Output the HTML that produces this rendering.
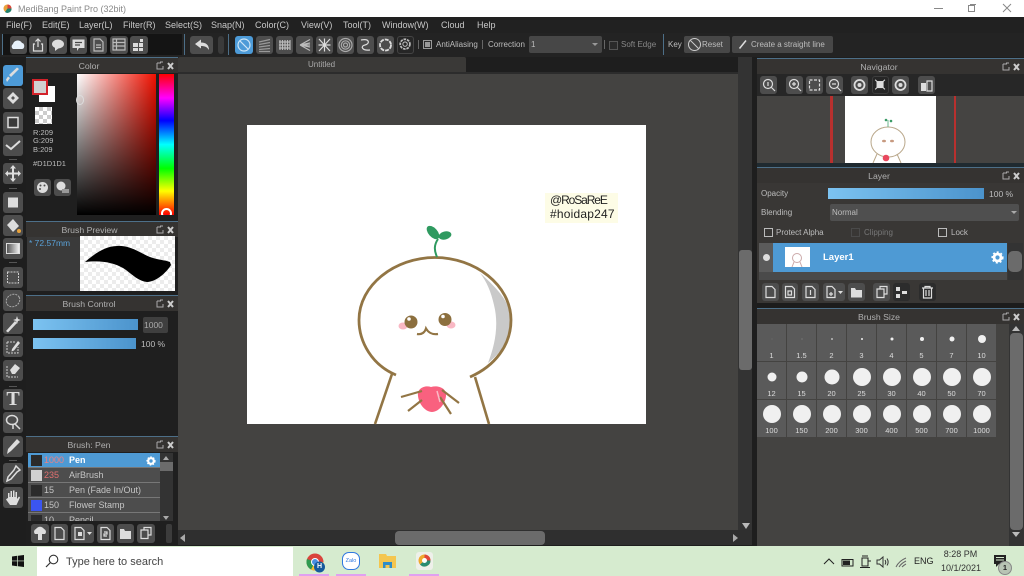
<!DOCTYPE html>
<html><head><meta charset="utf-8"><title>MediBang Paint Pro</title>
<style>
html,body{margin:0;padding:0;width:1024px;height:576px;overflow:hidden;background:#1e1e1e;font-family:"Liberation Sans",sans-serif}
div,span,svg{position:absolute;box-sizing:border-box}
.t{white-space:nowrap;font-size:8px;color:#bdbdbd;line-height:10px}
.m{top:20px;font-size:9px;color:#c8c8c8;line-height:11px;white-space:nowrap}
.b{background:#4d4d4d;border-radius:3px;top:36px;height:18px}
.b svg{left:0;top:0;width:100%;height:100%;fill:none;stroke:#ddd;stroke-width:1.2}
.h{background:#353331;border-top:1px solid #4d6f88;height:16px}
.h .t{left:0;text-align:center;top:3px;color:#b0b0b0;font-size:8.7px}
.h svg{top:3px;width:20px;height:10px;right:3px;fill:none;stroke:#aaa}
.tb{left:3px;width:20px;height:21px;background:#4d4d4d;border-radius:3px}
.tb svg{left:0;top:0;width:20px;height:21px;fill:#ddd;stroke:none}
.sp{left:9px;width:8px;height:1px;background:#555}
.sl{background:linear-gradient(90deg,#7cc3f1,#4b93cc);height:11px}
.rw{left:28px;width:132px;height:15px;background:#4d4d4d;border-bottom:1px solid #777}
.sw{left:3px;top:2px;width:11px;height:11px}
.n{left:16px;top:2px;font-size:9px;line-height:11px;color:#c5c5c5;white-space:nowrap}
.c{background:#5a5a5a;width:29px;height:37px}
.c i{position:absolute;background:#f0f0f0;border-radius:50%;left:50%;top:15px;transform:translate(-50%,-50%);display:block}
.c b{position:absolute;left:0;width:100%;top:27px;text-align:center;font:400 7.5px/10px "Liberation Sans",sans-serif;color:#ddd}
.r3 i{top:14px}.r3 b{top:26px}
.bb{background:#4d4d4d;border-radius:3px;height:18px;top:283px}
.bl{background:#4d4d4d;border-radius:3px;height:19px;top:524px}
.bb svg,.bl svg,.nb svg{left:0;top:0;width:100%;height:100%;fill:none;stroke:#ddd;stroke-width:1.2}
.nb{background:#4d4d4d;border-radius:3px;top:76px;height:18px}
</style></head>
<body>
<!-- title bar -->
<div style="left:0;top:0;width:1024px;height:17px;background:#fff"></div>
<svg style="left:3px;top:4px;width:9px;height:9px" viewBox="0 0 9 9"><circle cx="4.500" cy="4.500" r="4" fill="#e9a23b"/><path d="M4.500 4.500L4.500.5A4 4 0 0 1 8.500 4.500Z" fill="#d9433c"/><path d="M4.500 4.500L8.500 4.500A4 4 0 0 1 2 8Z" fill="#23806c"/></svg>
<div class="t" style="left:18px;top:4px;font-size:9px;color:#8a8a8a">MediBang Paint Pro (32bit)</div>
<div style="left:934px;top:8px;width:9px;height:1px;background:#888"></div>
<div style="left:968px;top:5px;width:7px;height:7px;border:1px solid #888;background:#fff"></div>
<div style="left:970px;top:4px;width:6px;height:1px;background:#888"></div>
<svg style="left:1002px;top:3px;width:10px;height:10px" viewBox="0 0 10 10"><path d="M1 1L9 9M9 1L1 9" stroke="#888" fill="none"/></svg>
<!-- menu -->
<div style="left:0;top:17px;width:1024px;height:16px;background:#212121"></div>
<div class="m" style="left:6px">File(F)</div><div class="m" style="left:42px">Edit(E)</div><div class="m" style="left:79px">Layer(L)</div><div class="m" style="left:123px">Filter(R)</div><div class="m" style="left:165px">Select(S)</div><div class="m" style="left:211px">Snap(N)</div><div class="m" style="left:255px">Color(C)</div><div class="m" style="left:301px">View(V)</div><div class="m" style="left:343px">Tool(T)</div><div class="m" style="left:382px">Window(W)</div><div class="m" style="left:441px">Cloud</div><div class="m" style="left:477px">Help</div>
<!-- toolbar -->
<div style="left:0;top:33px;width:1024px;height:24px;background:#232323"></div>
<div style="left:3px;top:34px;width:179px;height:21px;background:#141414"></div>
<div style="left:2px;top:34px;width:1px;height:21px;background:#4d6f88"></div>
<div style="left:184px;top:34px;width:1px;height:21px;background:#4d6f88"></div>
<div style="left:228px;top:34px;width:1px;height:21px;background:#4d6f88"></div>
<div style="left:663px;top:34px;width:1px;height:21px;background:#4d6f88"></div>
<div class="b" style="left:10px;width:17px"><svg viewBox="0 0 17 18"><path d="M3 13a3 3 0 0 1 0-5c1-4 7-5 9-1 3 0 3 6 0 6Z" fill="#e8f2fb" stroke="none"/></svg></div>
<div class="b" style="left:29px;width:18px"><svg viewBox="0 0 18 18"><path d="M6 8H4.500V15H13.500V8H12M9 11V3M6.500 5.500L9 3L11.500 5.500"/></svg></div>
<div class="b" style="left:49px;width:18px"><svg viewBox="0 0 18 18"><ellipse cx="9" cy="8" rx="6" ry="4.500" fill="#ddd" stroke="none"/><path d="M6 11L6 15L10 12" fill="#ddd" stroke="none"/></svg></div>
<div class="b" style="left:70px;width:17px"><svg viewBox="0 0 17 18"><path d="M2.500 3.500H14.500V12H9L7 15V12H2.500Z" fill="#ddd" stroke="none"/><path d="M5 6.500H12M5 9H10" stroke="#484848"/></svg></div>
<div class="b" style="left:90px;width:17px"><svg viewBox="0 0 17 18"><path d="M4 3H10L13 6V15H4ZM6 9H11M6 11.500H11" stroke="#bbb"/></svg></div>
<div class="b" style="left:110px;width:18px"><svg viewBox="0 0 18 18"><path d="M3 3H15V14H3ZM3 6.500H15M3 10H15M6.500 3V14" stroke="#bbb"/></svg></div>
<div class="b" style="left:130px;width:18px"><svg viewBox="0 0 18 18"><path d="M3 7H8V11H3ZM9 7H13V11H9ZM3 12H8V15H3ZM9 12H13V15H9ZM10 3H13V6H10Z" fill="#ddd" stroke="none"/></svg></div>
<div class="b" style="left:190px;width:23px"><svg viewBox="0 0 23 18"><path d="M5 8L11 3.500V6.500C16 6.500 19 9 19 14C17 11 15 10 11 10V12.500Z" fill="#ddd" stroke="none"/></svg></div>
<div class="b" style="left:218px;width:6px;background:#3a3a3a"></div>
<div class="b" style="left:235px;width:18px;background:#4d9bd8"><svg viewBox="0 0 18 18"><circle cx="9" cy="9" r="6" stroke="#cfe6f7"/><path d="M5 5L13 13" stroke="#cfe6f7"/></svg></div>
<div class="b" style="left:256px;width:17px"><svg viewBox="0 0 17 18" style="stroke:#999"><path d="M3 6L14 3.500M3 8.500L14 6.500M3 11L14 9.500M3 13.500L14 12.500M3 15.500H14"/></svg></div>
<div class="b" style="left:276px;width:17px"><svg viewBox="0 0 17 18" style="stroke:#bbb"><path d="M4 4V14M6.500 4V14M9 4V14M11.500 4V14M14 4V14M3 6H14M3 9H14M3 12H14"/></svg></div>
<div class="b" style="left:296px;width:17px"><svg viewBox="0 0 17 18" style="stroke:#bbb"><path d="M4 9L14 3.500M4 9L14 7M4 9H14M4 9L14 11M4 9L14 14.500"/></svg></div>
<div class="b" style="left:316px;width:17px"><svg viewBox="0 0 17 18"><path d="M3 3L14 15M14 3L3 15M8.500 2.500V15.500M2.500 9H14.500"/></svg></div>
<div class="b" style="left:337px;width:17px"><svg viewBox="0 0 17 18" style="stroke:#aaa"><circle cx="8.500" cy="9" r="6.500"/><circle cx="8.500" cy="9" r="4.200"/><circle cx="8.500" cy="9" r="2"/></svg></div>
<div class="b" style="left:357px;width:17px"><svg viewBox="0 0 17 18"><path d="M4 4C13 2 13 8 8 9S5 15 13 14"/></svg></div>
<div class="b" style="left:377px;width:17px"><svg viewBox="0 0 17 18" style="stroke-width:1.800"><circle cx="8.500" cy="9" r="5.500" stroke-dasharray="4 1"/></svg></div>
<div class="b" style="left:397px;width:17px;background:#262626;border:1px solid #444"><svg viewBox="0 0 17 18"><circle cx="8" cy="8" r="5.500" stroke-dasharray="3 1" stroke-width="2" stroke="#bbb"/><circle cx="8" cy="8" r="2.500" stroke="#bbb"/></svg></div>
<div style="left:418px;top:40px;width:1px;height:9px;background:#666"></div>
<div style="left:423px;top:40px;width:9px;height:9px;background:#2a2a2a;border:1px solid #999"></div>
<div style="left:425px;top:42px;width:5px;height:5px;background:#999"></div>
<div class="t" style="left:436px;top:40px">AntiAliasing</div>
<div style="left:482px;top:40px;width:1px;height:9px;background:#666"></div>
<div class="t" style="left:488px;top:40px">Correction</div>
<div style="left:529px;top:36px;width:73px;height:17px;background:#474747;border-radius:2px"></div>
<div class="t" style="left:531px;top:40px">1</div>
<div style="left:592px;top:43px;border:3px solid transparent;border-top:3px solid #999"></div>
<div style="left:604px;top:40px;width:1px;height:9px;background:#666"></div>
<div style="left:609px;top:41px;width:9px;height:9px;background:#2a2a2a;border:1px solid #555"></div>
<div class="t" style="left:621px;top:40px;color:#888">Soft Edge</div>
<div class="t" style="left:668px;top:40px">Key</div>
<div style="left:684px;top:36px;width:46px;height:17px;background:#474747;border-radius:2px"></div>
<svg style="left:687px;top:37px;width:15px;height:15px" viewBox="0 0 15 15"><circle cx="7.500" cy="7.500" r="6" fill="none" stroke="#ccc"/><path d="M3.500 3.500L11.500 11.500" stroke="#ccc"/></svg>
<div class="t" style="left:702px;top:40px">Reset</div>
<div style="left:732px;top:36px;width:101px;height:17px;background:#474747;border-radius:2px"></div>
<svg style="left:738px;top:39px;width:10px;height:11px" viewBox="0 0 10 11"><path d="M1.500 9.500L8 1.500" stroke="#ddd" stroke-width="1.500"/></svg>
<div class="t" style="left:751px;top:40px">Create a straight line</div>
<!-- centre area -->
<div style="left:178px;top:57px;width:579px;height:489px;background:#1e1e1e"></div>
<div style="left:178px;top:57px;width:288px;height:15px;background:#3a3937;border-radius:2px 2px 0 0"></div>
<div class="t" style="left:308px;top:60px;color:#aaa">Untitled</div>
<div style="left:178px;top:72px;width:574px;height:2px;background:#2c2c2c"></div>
<div style="left:178px;top:74px;width:560px;height:456px;background:#444341"></div>
<div style="left:738px;top:57px;width:14px;height:473px;background:#333"></div>
<div style="left:739px;top:250px;width:13px;height:120px;background:#6b6b6b;border-radius:3px"></div>
<div style="left:742px;top:523px;border:4px solid transparent;border-top:6px solid #bbb;border-bottom:0"></div>
<div style="left:178px;top:530px;width:574px;height:15px;background:#2f2f2f"></div>
<div style="left:395px;top:531px;width:150px;height:14px;background:#6b6b6b;border-radius:4px"></div>
<div style="left:180px;top:534px;border:4px solid transparent;border-right:5px solid #aaa;border-left:0"></div>
<div style="left:733px;top:534px;border:4px solid transparent;border-left:5px solid #aaa;border-right:0"></div>
<!-- canvas -->
<div style="left:247px;top:125px;width:399px;height:299px;background:#fff"></div>
<div style="left:545px;top:193px;width:73px;height:30px;background:#fdfce6"></div>
<div class="t" style="left:550px;top:193px;font-size:12px;line-height:14px;color:#222"><span style="position:static;letter-spacing:-1.1px">@RoSaReE</span><br><span style="position:static;letter-spacing:.2px">#hoidap247</span></div>
<svg style="left:340px;top:180px;width:300px;height:245px" viewBox="340 180 300 245">
<path d="M480 273C498 289 511 303 511 320C511 338 501 353 488 363C495 345 499 325 494 305C491 292 487 282 480 273Z" fill="#c9c9c9"/>
<path d="M396 375C372 365 359 342 359 320C359 285 395 257.500 435 257.500C475 257.500 511 285 511 320C511 345 495 366 470 377" fill="none" stroke="#927544" stroke-width="2.800"/>
<path d="M392 374L375 424M475 377L489 424" fill="none" stroke="#927544" stroke-width="2.600"/>
<path d="M437 257C434 250 434 245 438 239" fill="none" stroke="#2f9a60" stroke-width="2"/>
<ellipse cx="433" cy="232.500" rx="8" ry="4.500" transform="rotate(48 433 232.500)" fill="#2f9a60"/>
<ellipse cx="445" cy="235.500" rx="6.500" ry="4" transform="rotate(-15 445 235.500)" fill="#2f9a60"/>
<ellipse cx="403" cy="326" rx="4.500" ry="3.500" fill="#f9b8c4"/><ellipse cx="451" cy="325" rx="4.500" ry="3.500" fill="#f9b8c4"/>
<circle cx="411" cy="322" r="6.500" fill="#8c6f3e"/><circle cx="445" cy="319.500" r="6.500" fill="#8c6f3e"/>
<circle cx="409" cy="319" r="1.800" fill="#fff"/><circle cx="443" cy="316.500" r="1.800" fill="#fff"/>
<path d="M417 334C422 335 425 332 426 328.500C428 332 432 335 438 334" fill="none" stroke="#927544" stroke-width="2.200"/>
<path d="M431 387C425 385 417 388 418 396C419 405 426 412 432 412C438 412 445 405 446 396C447 388 438 385 431 387Z" fill="#f9617f"/>
<path d="M401 397L422 391M408 411L422 400M442 390L459 403M440 397L451 414" fill="none" stroke="#927544" stroke-width="2.200"/>
<path d="M437 391L440 402" stroke="#fbb9c6" stroke-width="1.500" fill="none"/>
</svg>
<!-- left tool bar -->
<div style="left:0;top:57px;width:26px;height:489px;background:#1e1e1e"></div>
<div class="tb" style="top:65px;background:#4d9bd8"><svg viewBox="0 0 20 21"><path d="M16 4L8 12L6 10L14 2.500ZM7 13L4 17L3 14.500L5 11.500Z"/></svg></div>
<div class="tb" style="top:88px"><svg viewBox="0 0 20 21"><path d="M4 10L10 4L16 10L10 16Z"/><path d="M8 10L10 8L12 10L10 12Z" fill="#555"/></svg></div>
<div class="tb" style="top:112px"><svg viewBox="0 0 20 21" style="fill:#3a3a3a;stroke:#ddd;stroke-width:1.500"><rect x="5" y="5.500" width="10" height="10"/></svg></div>
<div class="tb" style="top:135px"><svg viewBox="0 0 20 21" style="fill:none;stroke:#ddd;stroke-width:2"><path d="M3 10L8 14L17 6"/></svg></div>
<div class="sp" style="top:159px"></div>
<div class="tb" style="top:163px"><svg viewBox="0 0 20 21"><path d="M10 2L13 5.500H11V9.500H15V7.500L18 10.500L15 13.500V11.500H11V15.500H13L10 19L7 15.500H9V11.500H5V13.500L2 10.500L5 7.500V9.500H9V5.500H7Z"/></svg></div>
<div class="sp" style="top:188px"></div>
<div class="tb" style="top:192px"><svg viewBox="0 0 20 21"><rect x="5" y="5.500" width="10" height="10"/></svg></div>
<div class="tb" style="top:215px"><svg viewBox="0 0 20 21"><path d="M4 10L10 4L16 11L10 17Z"/><circle cx="16" cy="16" r="2" fill="#e8a23b"/></svg></div>
<div class="tb" style="top:238px"><div style="left:3px;top:5px;width:14px;height:11px;background:linear-gradient(90deg,#555,#eee);border:1px solid #ddd"></div></div>
<div class="sp" style="top:262px"></div>
<div class="tb" style="top:267px"><svg viewBox="0 0 20 21" style="fill:none;stroke:#ccc;stroke-dasharray:2 1"><rect x="4.500" y="5" width="11" height="11"/></svg></div>
<div class="tb" style="top:290px"><svg viewBox="0 0 20 21" style="fill:none;stroke:#aaa;stroke-dasharray:2 1"><ellipse cx="10" cy="10.500" rx="7" ry="6" transform="rotate(-30 10 10.500)"/></svg></div>
<div class="tb" style="top:313px"><svg viewBox="0 0 20 21"><path d="M3 18L12 8L14 10L5 19.500Z"/><path d="M14 3L15 6L18 7L15 8L14 11L13 8L10 7L13 6Z"/></svg></div>
<div class="tb" style="top:336px"><svg viewBox="0 0 20 21"><path d="M4 6H13M4 6V17H15V11" fill="none" stroke="#ccc" stroke-dasharray="2 1"/><path d="M9 13L15 5L17 7L11 14.500L8.500 15.500Z"/></svg></div>
<div class="tb" style="top:360px"><svg viewBox="0 0 20 21"><path d="M4 6V17H15" fill="none" stroke="#ccc" stroke-dasharray="2 1"/><path d="M7 10L12 4L17 8L12 14H9Z"/></svg></div>
<div class="sp" style="top:386px"></div>
<div class="tb" style="top:389px"><div style="left:3px;top:0;font:700 20px/21px 'Liberation Serif',serif;color:#ddd;width:14px;text-align:center">T</div></div>
<div class="tb" style="top:412px"><svg viewBox="0 0 20 21" style="fill:none;stroke:#ddd;stroke-width:1.500"><ellipse cx="9" cy="8" rx="5.500" ry="4.500"/><path d="M12 12L17 17M10 13L10 17"/></svg></div>
<div class="tb" style="top:436px"><svg viewBox="0 0 20 21"><path d="M14 3L17 6L8 15L4 18L5 13Z"/></svg></div>
<div class="sp" style="top:460px"></div>
<div class="tb" style="top:463px"><svg viewBox="0 0 20 21"><path d="M13 3L17 7L14 9L8 16L4 18L5 14L11 7Z" fill="none" stroke="#ddd" stroke-width="1.500"/></svg></div>
<div class="tb" style="top:487px"><svg viewBox="0 0 20 21"><path d="M5 11V6h1.500V10H7.500V4H9V10H10V3.500h1.500V10H12.500V5H14V12L16 9.500 17 10.500 13.500 18H7L3 12.500 4 11.500Z"/></svg></div>
<!-- Color panel -->
<div style="left:26px;top:57px;width:152px;height:489px;background:#1f1f1f"></div>
<div class="h" style="left:26px;top:57px;width:152px"><div class="t" style="width:126px">Color</div><svg viewBox="0 0 20 10"><path d="M2 2H6M8 1H5M2 2V8H8V5"/><path d="M13 2L18 8M18 2L13 8" stroke-width="2" stroke="#ccc"/></svg></div>
<div style="left:39px;top:86px;width:16px;height:16px;background:#fff"></div>
<div style="left:32px;top:79px;width:16px;height:16px;background:#d1d1d1;border:2px solid #d3222a"></div>
<div style="left:35px;top:107px;width:17px;height:17px;background:conic-gradient(#ccc 25%,#fff 0 50%,#ccc 0 75%,#fff 0) 0 0/8px 8px"></div>
<div class="t" style="left:33px;top:129px;font-size:7.500px;line-height:8.300px">R:209<br>G:209<br>B:209</div>
<div class="t" style="left:33px;top:159px;font-size:7.500px">#D1D1D1</div>
<div class="b" style="left:34px;top:179px;width:17px;height:17px"><svg viewBox="0 0 17 17"><circle cx="8.500" cy="8.500" r="5.500" fill="#ddd" stroke="none"/><circle cx="6.500" cy="6.500" r="1" fill="#4d4d4d" stroke="none"/><circle cx="10.500" cy="6.500" r="1" fill="#4d4d4d" stroke="none"/><circle cx="6" cy="10" r="1" fill="#4d4d4d" stroke="none"/></svg></div>
<div class="b" style="left:54px;top:179px;width:17px;height:17px"><svg viewBox="0 0 17 17"><circle cx="7" cy="7" r="4.500" fill="#ddd" stroke="none"/><rect x="8" y="10" width="7" height="4" fill="#999" stroke="none"/></svg></div>
<div style="left:77px;top:74px;width:79px;height:141px;background:linear-gradient(180deg,transparent,#000),linear-gradient(90deg,#fff,#f01000)"></div>
<div style="left:76px;top:95px;width:8px;height:10px;border:1px solid #ddd;border-radius:50%"></div>
<div style="left:159px;top:74px;width:15px;height:141px;background:linear-gradient(180deg,#f00 0%,#f0f 17%,#00f 33%,#0ff 50%,#0f0 67%,#ff0 83%,#f00 100%)"></div>
<div style="left:161px;top:208px;width:11px;height:11px;border:2px solid #fff;border-radius:50%"></div>
<div style="left:159px;top:215px;width:15px;height:6px;background:#1f1f1f"></div>
<!-- Brush preview -->
<div class="h" style="left:26px;top:221px;width:152px"><div class="t" style="width:127px">Brush Preview</div><svg viewBox="0 0 20 10"><path d="M2 2H6M8 1H5M2 2V8H8V5"/><path d="M13 2L18 8M18 2L13 8" stroke-width="2" stroke="#ccc"/></svg></div>
<div style="left:27px;top:237px;width:53px;height:54px;background:#3a3a3a"></div>
<div class="t" style="left:29px;top:238px;color:#5aa0d6;font-size:8.500px">* 72.57mm</div>
<div style="left:80px;top:236px;width:95px;height:55px;background:conic-gradient(#ececec 25%,#fff 0 50%,#ececec 0 75%,#fff 0) 0 0/8px 8px"></div>
<svg style="left:80px;top:236px;width:95px;height:55px" viewBox="80 236 95 55"><path d="M85 262C92 256 104 246 117 246C130 245 140 253 150 257C158 260 165 260 170 262L171 265C167 272 156 282 147 282C137 281 130 272 123 268C114 263 102 260 85 262Z" fill="#000"/></svg>
<!-- Brush control -->
<div class="h" style="left:26px;top:295px;width:152px"><div class="t" style="width:126px">Brush Control</div><svg viewBox="0 0 20 10"><path d="M2 2H6M8 1H5M2 2V8H8V5"/><path d="M13 2L18 8M18 2L13 8" stroke-width="2" stroke="#ccc"/></svg></div>
<div class="sl" style="left:33px;top:319px;width:105px"></div>
<div style="left:143px;top:317px;width:25px;height:16px;background:#3f3f3f;border-radius:2px"></div>
<div class="t" style="left:144px;top:320px;font-size:8.500px;color:#aaa">1000</div>
<div class="sl" style="left:33px;top:338px;width:103px"></div>
<div class="t" style="left:141px;top:339px;font-size:8.500px">100 %</div>
<!-- Brush list -->
<div class="h" style="left:26px;top:436px;width:152px"><div class="t" style="width:126px">Brush: Pen</div><svg viewBox="0 0 20 10"><path d="M2 2H6M8 1H5M2 2V8H8V5"/><path d="M13 2L18 8M18 2L13 8" stroke-width="2" stroke="#ccc"/></svg></div>
<div class="rw" style="top:453px;background:#4e9ad4"><div class="sw" style="background:#2b2b2b"></div><div class="n" style="color:#f08080">1000</div><div class="n" style="left:41px;color:#fff;font-weight:700">Pen</div>
<svg style="left:118px;top:3px;width:10px;height:10px" viewBox="0 0 10 10"><circle cx="5" cy="5" r="2.800" fill="none" stroke="#fff" stroke-width="2.200"/><circle cx="5" cy="5" r="4" fill="none" stroke="#fff" stroke-width="1.200" stroke-dasharray="1.500 1.500"/></svg></div>
<div class="rw" style="top:468px"><div class="sw" style="background:#d1d1d1"></div><div class="n" style="color:#e07070">235</div><div class="n" style="left:41px">AirBrush</div></div>
<div class="rw" style="top:483px"><div class="sw" style="background:#2b2b2b"></div><div class="n">15</div><div class="n" style="left:41px">Pen (Fade In/Out)</div></div>
<div class="rw" style="top:498px"><div class="sw" style="background:#3b55f0"></div><div class="n">150</div><div class="n" style="left:41px">Flower Stamp</div></div>
<div class="rw" style="top:513px;height:8px;overflow:hidden;border:0"><div class="sw" style="background:#2b2b2b;top:2px"></div><div class="n" style="top:2px">10</div><div class="n" style="left:41px;top:2px">Pencil</div></div>
<div style="left:160px;top:453px;width:13px;height:68px;background:#333"></div>
<div style="left:160px;top:462px;width:13px;height:9px;background:#6b6b6b"></div>
<div style="left:163px;top:456px;border:3.500px solid transparent;border-bottom:4px solid #aaa;border-top:0"></div>
<div style="left:163px;top:516px;border:3.500px solid transparent;border-top:4px solid #aaa;border-bottom:0"></div>
<div class="bl" style="left:31px;width:18px"><svg viewBox="0 0 18 19"><path d="M4 10a3 3 0 0 1 1-5c2-3 6-3 8 0a3 3 0 0 1 1 5H11V16H7V10Z" fill="#ddd" stroke="none"/></svg></div>
<div class="bl" style="left:51px;width:17px"><svg viewBox="0 0 17 19"><path d="M4 3.500H10L13 6.500V15.500H4Z"/></svg></div>
<div class="bl" style="left:71px;width:23px"><svg viewBox="0 0 23 19"><path d="M4 3.500H10L13 6.500V15.500H4Z"/><rect x="7" y="8" width="4" height="4" fill="#ddd" stroke="none"/><path d="M16 8H21L18.500 11Z" fill="#ddd" stroke="none"/></svg></div>
<div class="bl" style="left:97px;width:17px"><svg viewBox="0 0 17 19"><path d="M4 3.500H10L13 6.500V15.500H4ZM7 8H10V10H7V12H10"/></svg></div>
<div class="bl" style="left:117px;width:17px"><svg viewBox="0 0 17 19"><path d="M3 5H7L8 7H14V15H3Z" fill="#ddd" stroke="none"/></svg></div>
<div class="bl" style="left:137px;width:18px"><svg viewBox="0 0 18 19"><path d="M7 6V3.500H14V11H11M4 6H11V14.500H4Z"/></svg></div>
<div style="left:166px;top:524px;width:6px;height:19px;background:#3c3c3c;border-radius:2px"></div>
<!-- Right: background -->
<div style="left:752px;top:57px;width:272px;height:489px;background:#1e1e1e"></div>
<!-- Navigator -->
<div class="h" style="left:757px;top:58px;width:267px"><div class="t" style="width:244px">Navigator</div><svg viewBox="0 0 20 10"><path d="M2 2H6M8 1H5M2 2V8H8V5"/><path d="M13 2L18 8M18 2L13 8" stroke-width="2" stroke="#ccc"/></svg></div>
<div style="left:757px;top:74px;width:267px;height:22px;background:#272727"></div>
<div class="nb" style="left:760px;width:17px"><svg viewBox="0 0 17 18"><circle cx="8" cy="8" r="4.500"/><path d="M11.500 11.500L15 15M8 6V10"/></svg></div>
<div class="nb" style="left:786px;width:17px"><svg viewBox="0 0 17 18"><circle cx="8" cy="8" r="4.500"/><path d="M11.500 11.500L15 15M6 8H10M8 6V10"/></svg></div>
<div class="nb" style="left:806px;width:17px"><svg viewBox="0 0 17 18"><rect x="3.500" y="4" width="10" height="10" stroke-dasharray="3 1.500"/></svg></div>
<div class="nb" style="left:826px;width:17px"><svg viewBox="0 0 17 18"><circle cx="8" cy="8" r="4.500"/><path d="M11.500 11.500L15 15M6 8H10"/></svg></div>
<div class="nb" style="left:851px;width:17px"><svg viewBox="0 0 17 18" style="stroke-width:1.800"><circle cx="8.500" cy="9" r="5"/><circle cx="8.500" cy="9" r="2" fill="#ddd" stroke="none"/></svg></div>
<div class="nb" style="left:872px;width:17px;background:#262626;border:1px solid #3d3d3d"><svg viewBox="0 0 17 18"><rect x="4" y="4.500" width="8" height="8" fill="#ddd" stroke="none"/><path d="M2.500 3L13.500 14M13.500 3L2.500 14"/></svg></div>
<div class="nb" style="left:892px;width:17px"><svg viewBox="0 0 17 18" style="stroke-width:1.800"><circle cx="8.500" cy="9" r="5"/><circle cx="8.500" cy="9" r="2" fill="#ddd" stroke="none"/></svg></div>
<div class="nb" style="left:918px;width:17px"><svg viewBox="0 0 17 18"><path d="M3 7H8V15H3Z" fill="#ddd" stroke="none"/><path d="M9 5H14V15H9Z"/></svg></div>
<div style="left:757px;top:96px;width:267px;height:67px;background:#454442"></div>
<div style="left:830px;top:96px;width:3px;height:67px;background:#b8302e"></div>
<div style="left:954px;top:96px;width:2px;height:67px;background:#b8302e"></div>
<div style="left:845px;top:96px;width:91px;height:67px;background:#fff"></div>
<svg style="left:845px;top:96px;width:91px;height:67px" viewBox="845 96 91 67"><ellipse cx="888" cy="142" rx="17" ry="15" fill="#fff" stroke="#b9a78a"/><path d="M888 127V120" stroke="#6bb58d"/><circle cx="886" cy="120" r="1.300" fill="#3a9a66"/><circle cx="891" cy="121" r="1.300" fill="#3a9a66"/><path d="M877 154L873 163M897 154L901 163" stroke="#b9a78a"/><ellipse cx="884" cy="141" rx="2" ry="1.300" fill="#c79a80"/><ellipse cx="892" cy="141" rx="2" ry="1.300" fill="#c79a80"/><circle cx="886" cy="158" r="3.300" fill="#e8485e"/></svg>
<div style="left:757px;top:163px;width:267px;height:4px;background:#1f2a30"></div>
<!-- Layer -->
<div class="h" style="left:757px;top:167px;width:267px"><div class="t" style="width:244px">Layer</div><svg viewBox="0 0 20 10"><path d="M2 2H6M8 1H5M2 2V8H8V5"/><path d="M13 2L18 8M18 2L13 8" stroke-width="2" stroke="#ccc"/></svg></div>
<div style="left:757px;top:183px;width:267px;height:120px;background:#393735"></div>
<div class="t" style="left:761px;top:189px">Opacity</div>
<div class="sl" style="left:828px;top:188px;width:156px"></div>
<div class="t" style="left:989px;top:189px;font-size:8.500px">100 %</div>
<div class="t" style="left:761px;top:208px">Blending</div>
<div style="left:830px;top:204px;width:189px;height:17px;background:#4f4f4f;border-radius:2px"></div>
<div class="t" style="left:832px;top:208px">Normal</div>
<div style="left:1011px;top:211px;border:3px solid transparent;border-top:3px solid #aaa"></div>
<div style="left:764px;top:228px;width:9px;height:9px;border:1px solid #bbb"></div>
<div class="t" style="left:776px;top:228px">Protect Alpha</div>
<div style="left:851px;top:228px;width:9px;height:9px;border:1px solid #4a4a4a"></div>
<div class="t" style="left:864px;top:228px;color:#777">Clipping</div>
<div style="left:938px;top:228px;width:9px;height:9px;border:1px solid #bbb"></div>
<div class="t" style="left:951px;top:228px">Lock</div>
<div style="left:759px;top:243px;width:248px;height:37px;background:#4a4a4a"></div>
<div style="left:759px;top:243px;width:14px;height:29px;background:#5b5b5b"></div>
<div style="left:763px;top:254px;width:7px;height:7px;border-radius:50%;background:#ddd"></div>
<div style="left:773px;top:243px;width:234px;height:29px;background:#4e9ad4"></div>
<div style="left:785px;top:247px;width:25px;height:20px;background:#fff"></div>
<svg style="left:785px;top:247px;width:25px;height:20px" viewBox="0 0 25 20"><circle cx="12" cy="11" r="4.500" fill="none" stroke="#caa"/><path d="M9 15L7 20M15 15L17 20" stroke="#caa"/></svg>
<div class="t" style="left:823px;top:253px;color:#fff;font-weight:700;font-size:9.500px">Layer1</div>
<svg style="left:991px;top:251px;width:13px;height:13px" viewBox="0 0 13 13"><circle cx="6.500" cy="6.500" r="3.500" fill="none" stroke="#fff" stroke-width="2.800"/><circle cx="6.500" cy="6.500" r="5.300" fill="none" stroke="#fff" stroke-width="1.600" stroke-dasharray="2 2"/></svg>
<div style="left:1008px;top:243px;width:15px;height:37px;background:#333"></div>
<div style="left:1008px;top:251px;width:14px;height:21px;background:#6b6b6b;border-radius:5px"></div>
<div class="bb" style="left:762px;width:17px"><svg viewBox="0 0 17 18"><path d="M4 3.500H10L13 6.500V14.500H4Z"/></svg></div>
<div class="bb" style="left:782px;width:16px"><svg viewBox="0 0 16 18"><path d="M3.500 3.500H10L12.500 6V14.500H3.500ZM6 8H9.500V12H6Z"/></svg></div>
<div class="bb" style="left:802px;width:17px"><svg viewBox="0 0 17 18"><path d="M4 3.500H10L13 6.500V14.500H4ZM8.500 7V12"/></svg></div>
<div class="bb" style="left:823px;width:22px"><svg viewBox="0 0 22 18"><path d="M4 3.500H9L12 6.500V14.500H4ZM8 9V13M6 11H10"/><path d="M15 8H20L17.500 11Z" fill="#ddd" stroke="none"/></svg></div>
<div class="bb" style="left:848px;width:17px"><svg viewBox="0 0 17 18"><path d="M3 5H7L8 7H14V14.500H3Z" fill="#ddd" stroke="none"/></svg></div>
<div class="bb" style="left:873px;width:17px"><svg viewBox="0 0 17 18"><path d="M7 6V3.500H14V11H11M4 6H11V14.500H4Z"/></svg></div>
<div class="bb" style="left:893px;width:17px;background:#2c2c2c"><svg viewBox="0 0 17 18"><path d="M3 4H7V8H3ZM3 11H7V15H3ZM9 8H14V11H9Z" stroke="none" fill="#ddd"/></svg></div>
<div class="bb" style="left:919px;width:17px;background:#2c2c2c"><svg viewBox="0 0 17 18"><path d="M3 5H14M6 5V3.500H11V5M4.500 5V15H12.500V5M7 7V13M10 7V13"/></svg></div>
<!-- Brush Size -->
<div style="left:757px;top:303px;width:267px;height:5px;background:#1c1c1c"></div>
<div class="h" style="left:757px;top:308px;width:267px"><div class="t" style="width:244px">Brush Size</div><svg viewBox="0 0 20 10"><path d="M2 2H6M8 1H5M2 2V8H8V5"/><path d="M13 2L18 8M18 2L13 8" stroke-width="2" stroke="#ccc"/></svg></div>
<div style="left:757px;top:324px;width:252px;height:222px;background:#444341"></div>
<div style="left:1009px;top:324px;width:15px;height:222px;background:#333"></div>
<div style="left:1010px;top:333px;width:13px;height:197px;background:#6b6b6b;border-radius:4px"></div>
<div style="left:1012px;top:326px;border:4px solid transparent;border-bottom:5px solid #bbb;border-top:0"></div>
<div style="left:1012px;top:532px;border:4px solid transparent;border-top:5px solid #bbb;border-bottom:0"></div>
<div class="c" style="left:757px;top:324px"><i style="width:1px;height:1px;background:#777"></i><b>1</b></div>
<div class="c" style="left:787px;top:324px"><i style="width:1px;height:1px;background:#999"></i><b>1.5</b></div>
<div class="c" style="left:817px;top:324px"><i style="width:2px;height:2px;background:#bbb"></i><b>2</b></div>
<div class="c" style="left:847px;top:324px"><i style="width:2px;height:2px"></i><b>3</b></div>
<div class="c" style="left:877px;top:324px"><i style="width:3px;height:3px"></i><b>4</b></div>
<div class="c" style="left:907px;top:324px"><i style="width:4px;height:4px"></i><b>5</b></div>
<div class="c" style="left:937px;top:324px"><i style="width:5px;height:5px"></i><b>7</b></div>
<div class="c" style="left:967px;top:324px"><i style="width:8px;height:8px"></i><b>10</b></div>
<div class="c" style="left:757px;top:362px"><i style="width:9px;height:9px"></i><b>12</b></div>
<div class="c" style="left:787px;top:362px"><i style="width:11px;height:11px"></i><b>15</b></div>
<div class="c" style="left:817px;top:362px"><i style="width:15px;height:15px"></i><b>20</b></div>
<div class="c" style="left:847px;top:362px"><i style="width:18px;height:18px"></i><b>25</b></div>
<div class="c" style="left:877px;top:362px"><i style="width:18px;height:18px"></i><b>30</b></div>
<div class="c" style="left:907px;top:362px"><i style="width:18px;height:18px"></i><b>40</b></div>
<div class="c" style="left:937px;top:362px"><i style="width:18px;height:18px"></i><b>50</b></div>
<div class="c" style="left:967px;top:362px"><i style="width:18px;height:18px"></i><b>70</b></div>
<div class="c r3" style="left:757px;top:400px"><i style="width:18px;height:18px"></i><b>100</b></div>
<div class="c r3" style="left:787px;top:400px"><i style="width:18px;height:18px"></i><b>150</b></div>
<div class="c r3" style="left:817px;top:400px"><i style="width:18px;height:18px"></i><b>200</b></div>
<div class="c r3" style="left:847px;top:400px"><i style="width:18px;height:18px"></i><b>300</b></div>
<div class="c r3" style="left:877px;top:400px"><i style="width:18px;height:18px"></i><b>400</b></div>
<div class="c r3" style="left:907px;top:400px"><i style="width:18px;height:18px"></i><b>500</b></div>
<div class="c r3" style="left:937px;top:400px"><i style="width:18px;height:18px"></i><b>700</b></div>
<div class="c r3" style="left:967px;top:400px"><i style="width:18px;height:18px"></i><b>1000</b></div>
<!-- taskbar -->
<div style="left:0;top:546px;width:1024px;height:30px;background:#d6ebcf"></div>
<svg style="left:12px;top:555px;width:12px;height:12px" viewBox="0 0 12 12"><path d="M0 1.500L5.300 .8V5.600H0ZM6 .7L12 0V5.600H6ZM0 6.300H5.300V11.200L0 10.500ZM6 6.300H12V12L6 11.300Z" fill="#111"/></svg>
<div style="left:37px;top:547px;width:256px;height:29px;background:#fff"></div>
<svg style="left:45px;top:554px;width:14px;height:14px" viewBox="0 0 14 14"><circle cx="8.500" cy="5.500" r="4.300" fill="none" stroke="#333" stroke-width="1.100"/><path d="M5.500 8.500L1 13" stroke="#333" stroke-width="1.200"/></svg>
<div class="t" style="left:66px;top:555px;font-size:11px;line-height:14px;color:#444">Type here to search</div>
<svg style="left:305px;top:552px;width:22px;height:22px" viewBox="0 0 22 22"><circle cx="10" cy="10" r="8.500" fill="#d9433c"/><path d="M10 10L18.500 10A8.500 8.500 0 0 1 6 17.500Z" fill="#f3c02f"/><path d="M10 10L6 17.500A8.500 8.500 0 0 1 2 7Z" fill="#2f9a50"/><circle cx="10" cy="10" r="3.500" fill="#4a8fe0" stroke="#fff"/><circle cx="14.500" cy="15" r="5.500" fill="#155a9c"/></svg>
<div style="left:313.500px;top:562px;width:12px;height:10px;font:700 7px/10px 'Liberation Sans',sans-serif;color:#fff;text-align:center">H</div>
<div style="left:342px;top:552px;width:18px;height:18px;background:#fff;border:1.500px solid #2f78e0;border-radius:7px"></div>
<div style="left:344px;top:557px;width:14px;font:400 5.500px/8px 'Liberation Sans',sans-serif;color:#2f78e0;text-align:center">Zalo</div>
<svg style="left:379px;top:553px;width:17px;height:16px" viewBox="0 0 17 16"><path d="M0 1H7L8 3H17V15H0Z" fill="#f4c64f"/><path d="M4 9H13V15H10.500V12H6.500V15H4Z" fill="#2f8dc8"/></svg>
<div style="left:416px;top:552px;width:17px;height:18px;background:#eef0ea;border-radius:3px"></div>
<svg style="left:418px;top:554px;width:13px;height:13px" viewBox="0 0 13 13"><circle cx="6.500" cy="6.500" r="6" fill="#f0a92e"/><path d="M6.500 6.500V.5A6 6 0 0 1 12.500 6.500Z" fill="#e0453a"/><path d="M6.500 6.500H12.500A6 6 0 0 1 2 10.500Z" fill="#2a8c72"/><circle cx="6.500" cy="6.500" r="2.500" fill="#fff"/></svg>
<div style="left:299px;top:574px;width:30px;height:2px;background:#e0a0f0"></div>
<div style="left:336px;top:574px;width:30px;height:2px;background:#e0a0f0"></div>
<div style="left:409px;top:574px;width:30px;height:2px;background:#e0a0f0"></div>
<svg style="left:822px;top:555px;width:90px;height:14px" viewBox="0 0 90 14" fill="none" stroke="#222">
<path d="M2 9L7 4L12 9"/><rect x="20" y="4.500" width="11" height="6.500"/><rect x="21.500" y="6" width="6" height="3.500" fill="#222"/>
<rect x="40" y="3" width="6" height="8"/><path d="M38 12.500H48M40 1H46M46 6H49"/>
<path d="M55 5V9H57.500L61 12V2L57.500 5ZM63 5C64 6.500 64 8 63 9.500M65 3.500C66.500 6 66.500 8.500 65 10.500" stroke="#333"/>
<path d="M74 12C76 8 79 5 84 3M77 12C78.500 9.500 80 8 84 6M80 12C81 11 82 10 84 9" stroke="#666"/>
</svg>
<div class="t" style="left:914px;top:556px;font-size:9px;line-height:11px;color:#222">ENG</div>
<div class="t" style="left:941px;top:547px;font-size:9px;line-height:14px;color:#333;text-align:center;width:39px">8:28 PM<br>10/1/2021</div>
<svg style="left:993px;top:554px;width:14px;height:14px" viewBox="0 0 14 14"><path d="M1 1H13V10H6L3 13V10H1Z" fill="#222"/><path d="M3 3.500H11M3 6H11" stroke="#d6ebcf"/></svg>
<div style="left:998px;top:561px;width:14px;height:14px;border-radius:50%;background:#b8c4b4;border:1px solid #888;font:700 7.500px/12px 'Liberation Sans',sans-serif;color:#222;text-align:center">1</div>
</body></html>
